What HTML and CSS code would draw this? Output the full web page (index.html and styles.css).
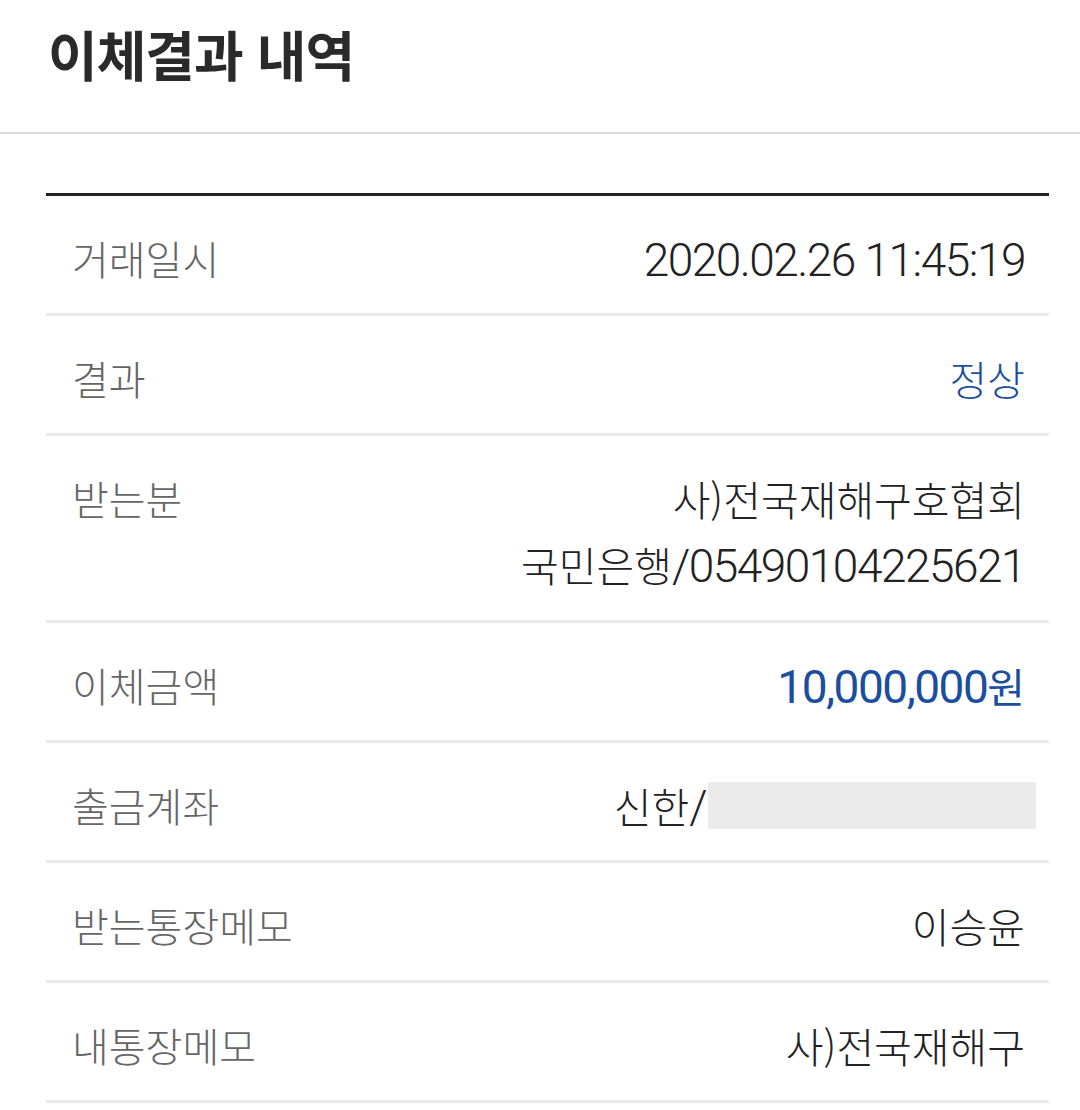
FILE: index.html
```html
<!DOCTYPE html>
<html lang="ko">
<head>
<meta charset="utf-8">
<link rel="stylesheet" href="styles.css">
</head>
<body>
<header class="header">
  <h1 class="title">이체결과 내역</h1>
</header>
<main class="content">
  <dl class="list">
    <div class="row">
      <dt class="label">거래일시</dt>
      <dd class="value"><span class="num">2020.02.26 11:45:19</span></dd>
    </div>
    <div class="row">
      <dt class="label">결과</dt>
      <dd class="value blue">정상</dd>
    </div>
    <div class="row">
      <dt class="label">받는분</dt>
      <dd class="value multi">사)전국재해구호협회<br>국민은행<span class="num">/05490104225621</span></dd>
    </div>
    <div class="row">
      <dt class="label">이체금액</dt>
      <dd class="value blue amount"><span class="num">10,000,000</span>원</dd>
    </div>
    <div class="row">
      <dt class="label">출금계좌</dt>
      <dd class="value account"><span>신한<span class="num">/</span></span><span class="masked"></span></dd>
    </div>
    <div class="row">
      <dt class="label">받는통장메모</dt>
      <dd class="value">이승윤</dd>
    </div>
    <div class="row">
      <dt class="label">내통장메모</dt>
      <dd class="value">사)전국재해구</dd>
    </div>
  </dl>
</main>
</body>
</html>
```

FILE: styles.css
```css
html, body {
  margin: 0;
  padding: 0;
  background: #ffffff;
}
body {
  font-family: "Noto Sans CJK KR", "Noto Sans", sans-serif;
  color: #222222;
}
.header {
  height: 134px;
  border-bottom: 2px solid #dcdcdc;
  padding-left: 48px;
  box-sizing: border-box;
}
.title {
  margin: 0;
  padding-top: 19px;
  font-size: 54px;
  line-height: 70px;
  font-weight: 700;
  color: #2a2a2a;
  letter-spacing: -1px;
}
.content {
  padding: 59px 31px 0 46px;
}
.list {
  margin: 0;
  border-top: 3px solid #222222;
}
.row {
  display: flex;
  justify-content: space-between;
  align-items: flex-start;
  padding: 30px 24px 23px 26px;
  border-bottom: 3px solid #e8e8e8;
}
.label {
  margin: 0;
  font-size: 40px;
  line-height: 64px;
  font-weight: 300;
  color: #666666;
}
.value {
  margin: 0;
  font-size: 41px;
  line-height: 64px;
  font-weight: 300;
  color: #222222;
  text-align: right;
}
.value.multi {
  line-height: 65.5px;
}
.num {
  font-family: "Roboto", "Noto Sans", sans-serif;
  font-size: 46px;
  line-height: 1;
  font-weight: 300;
  letter-spacing: -1.5px;
}
.value.blue {
  color: #1b4e9e;
}
.value.amount,
.value.amount .num {
  font-weight: 400;
}
.account {
  display: flex;
  align-items: center;
  margin-right: -11px;
}
.masked {
  display: inline-block;
  width: 328px;
  height: 47px;
  background: #ebebeb;
  margin-left: 2px;
}
```
